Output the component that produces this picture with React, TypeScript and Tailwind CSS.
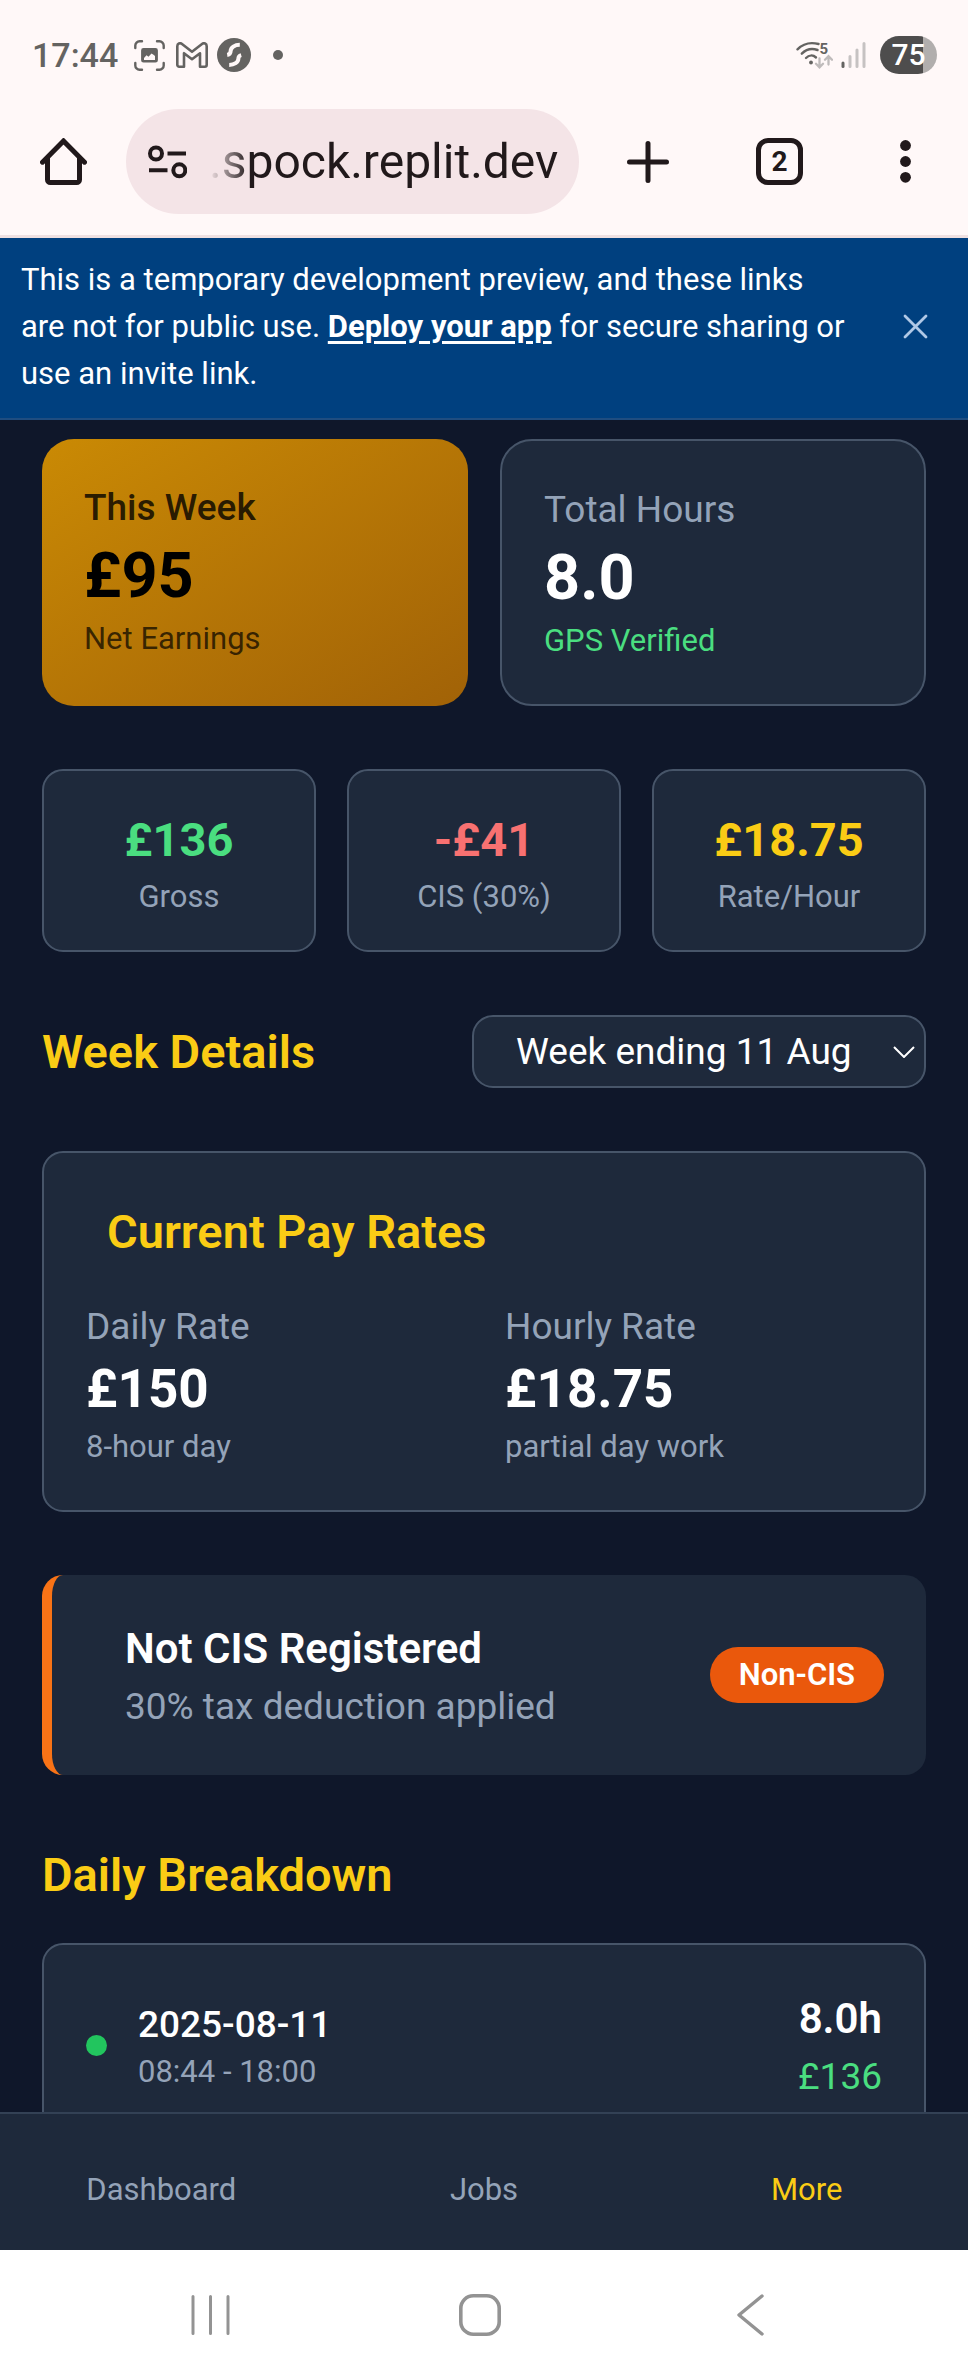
import React from "react";

function StatusBar() {
  return (
    <div className="flex items-center justify-between pt-9 pr-[31px] pl-8 text-[#646361]">
      <div className="flex h-[38px] items-center">
        <span className="w-[102px] text-[34px] leading-[38px] font-medium">17:44</span>
        <svg width="31" height="31" viewBox="0 0 31 31" fill="none" stroke="currentColor" strokeWidth="2.4" strokeLinecap="round" aria-hidden="true">
          <path d="M1.3 8V5.5a4.2 4.2 0 0 1 4.2-4.2H8M23 1.3h2.500a4.200 4.200 0 0 1 4.200 4.200V8M29.700 23v2.500a4.200 4.200 0 0 1-4.200 4.200H23M8 29.700H5.500a4.200 4.200 0 0 1-4.200-4.200V23" />
          <path d="M9.500 8h12a2.400 2.400 0 0 1 2.400 2.400v9.800a2.400 2.400 0 0 1-2.400 2.400h-12a2.400 2.400 0 0 1-2.400-2.400v-9.800A2.400 2.400 0 0 1 9.500 8Z" fill="currentColor" stroke="none" />
          <path d="m10 18 2.500-2.700 2 1.500 3-3.300 2 1.200 1.500 1.300V20H10Z" fill="#fff8f8" stroke="none" />
        </svg>
        <svg className="ml-[11px]" width="32" height="26" viewBox="0 0 32 26" fill="none" stroke="currentColor" strokeWidth="2.600" strokeLinejoin="round" aria-hidden="true">
          <path d="M1.300 4.200c0-2.600 2.600-3.800 4.700-2.200L16 9.800 26 2c2.100-1.600 4.700-.4 4.700 2.200v18.600a1.900 1.900 0 0 1-1.900 1.900H24V11.200l-8 6-8-6v13.500H3.200a1.900 1.900 0 0 1-1.900-1.900Z" />
        </svg>
        <svg className="ml-[9px]" width="34" height="34" viewBox="0 0 34 34" aria-hidden="true">
          <circle cx="17" cy="17" r="17" fill="currentColor" />
          <g fill="none" stroke="#fff8f8" strokeWidth="4">
            <path d="M22.800 6.800c-5 0-9.200 2.600-9.200 6.500 0 1.800-.8 3.200-3.400 3.600" />
            <path d="M12.200 27c5 0 9.200-2.600 9.200-6.500 0-1.800.5-2.800 2.800-3.400" />
          </g>
        </svg>
        <span className="ml-[22px] size-[10px] rounded-full bg-current" />
      </div>
      <div className="flex h-[38px] items-center">
        <svg width="37" height="28" viewBox="0 0 37 28" fill="none" strokeLinecap="round" aria-hidden="true">
          <g stroke="#646361" strokeWidth="2.400">
            <path d="M1.500 8.300C7 2.800 14 .8 22.500 3" />
            <path d="M5.800 12.700c4.500-4.600 10-5.600 15.700-3.700" />
            <path d="M10 17c3-3 7-3.300 10-.5" />
          </g>
          <circle cx="15" cy="21.500" r="1.900" fill="#646361" />
          <text x="23.500" y="13" fontSize="15" fontWeight="700" fill="#646361">5</text>
          <path d="M23.500 17.500V26m-3.500-3.200 3.500 3.500 3.500-3.500M32.500 23.500V15.500M29 18.700l3.500-3.500 3.500 3.500" stroke="#bfbbbb" strokeWidth="2.300" />
        </svg>
        <svg className="ml-2" width="26" height="28" viewBox="0 0 26 28" strokeWidth="3" strokeLinecap="round" aria-hidden="true">
          <path d="M2 22v3.500" stroke="#646361" />
          <path d="M9 15.500v10M16 9v16.500M23 2.500v23" stroke="#c6c2c2" />
        </svg>
        <span className="ml-[13px] flex h-[38px] w-[57px] items-center justify-center rounded-full bg-linear-to-r from-[#4e4d4d] from-75% to-[#b1aead] to-75% text-[30px] leading-[38px] font-medium text-white">
          75
        </span>
      </div>
    </div>
  );
}

function BrowserBar() {
  return (
    <div className="flex items-center pt-[35px] pr-[57px] pb-[21px] pl-10 text-[#21191b]">
      <button type="button" aria-label="Home" className="shrink-0">
        <svg width="47" height="47" viewBox="0 0 47 47" fill="none" stroke="currentColor" strokeWidth="5" strokeLinejoin="round" strokeLinecap="round" aria-hidden="true">
          <path d="M7.500 20.500v21.200a2.800 2.800 0 0 0 2.800 2.800h26.400a2.800 2.800 0 0 0 2.800-2.800V20.500" />
          <path d="M2.500 24.200 23.500 3l21 21.200" strokeLinejoin="miter" />
        </svg>
      </button>
      <div className="ml-[39px] flex h-[105px] min-w-0 flex-1 items-center rounded-full bg-[#f4e4e7] pr-4 pl-[22px]">
        <svg className="shrink-0" width="39" height="34" viewBox="0 0 39 34" fill="none" stroke="currentColor" strokeWidth="4" aria-hidden="true">
          <circle cx="8" cy="8.500" r="6" />
          <circle cx="31.300" cy="25.300" r="6" />
          <path d="M19.500 8.500H38M1 25.300h18.500" />
        </svg>
        <input
          type="text"
          aria-label="Address"
          defaultValue=".spock.replit.dev"
          className="ml-[22px] w-full min-w-0 bg-transparent text-[48px] leading-[60px] outline-none [mask-image:linear-gradient(to_right,transparent,black_40px)]"
        />
      </div>
      <button type="button" aria-label="New tab" className="ml-12 shrink-0">
        <svg width="42" height="42" viewBox="0 0 42 42" stroke="currentColor" strokeWidth="5" strokeLinecap="round" aria-hidden="true">
          <path d="M21 2.500v37M2.500 21h37" />
        </svg>
      </button>
      <button type="button" aria-label="Tabs" className="ml-[87px] flex size-[47px] shrink-0 items-center justify-center rounded-xl border-5 border-current text-[28px] leading-8 font-bold">
        2
      </button>
      <button type="button" aria-label="Menu" className="ml-[97px] shrink-0">
        <svg width="11" height="43" viewBox="0 0 11 43" fill="currentColor" aria-hidden="true">
          <circle cx="5.500" cy="5.500" r="5.400" />
          <circle cx="5.500" cy="21.500" r="5.400" />
          <circle cx="5.500" cy="37.300" r="5.400" />
        </svg>
      </button>
    </div>
  );
}

function PreviewBanner() {
  return (
    <div className="flex items-center justify-between border-b-2 border-[#1f4d80] bg-[#00407f] pt-[18px] pr-10 pb-[21px] pl-[21px] text-white">
      <p className="max-w-[830px] text-[31px] leading-[47px]">
        This is a temporary development preview, and these links are not for public use.{" "}
        <a href="#deploy" className="font-bold underline decoration-3 underline-offset-4">Deploy your app</a> for secure sharing or use an invite link.
      </p>
      <button type="button" aria-label="Close" className="shrink-0">
        <svg width="25" height="25" viewBox="0 0 25 25" stroke="#b0c8e6" strokeWidth="2.800" strokeLinecap="round" aria-hidden="true">
          <path d="m2 2 21 21M23 2 2 23" />
        </svg>
      </button>
    </div>
  );
}

const panel = "border-2 border-[#475569] bg-[#1e293b]";
const label = "text-[37px] leading-[53px]";
const small = "text-[31px] leading-[42px]";
const heading = "text-[47px] leading-[73px] font-semibold text-[#facc15]";

const stats = [
  { value: "£136", label: "Gross", color: "text-[#4ade80]" },
  { value: "-£41", label: "CIS (30%)", color: "text-[#f87171]" },
  { value: "£18.75", label: "Rate/Hour", color: "text-[#facc15]" },
];

const rates = [
  { name: "Daily Rate", value: "£150", note: "8-hour day" },
  { name: "Hourly Rate", value: "£18.75", note: "partial day work" },
];

const tabs = [
  { name: "Dashboard", color: "text-[#94a3b8]" },
  { name: "Jobs", color: "text-[#94a3b8]" },
  { name: "More", color: "text-[#facc15]" },
];

function Earnings() {
  return (
    <main className="min-h-0 flex-1 overflow-y-auto px-[42px] pt-[19px] [scrollbar-width:none]">
      <div className="flex flex-col gap-[63px]">
        <section className="grid grid-cols-2 gap-8">
          <div className="rounded-4xl bg-linear-to-br from-[#ca8a04] to-[#a16207] p-[42px] text-black">
            <p className={`${label} font-medium text-black/80`}>This Week</p>
            <p className="text-[63px] leading-[84px] font-bold">£95</p>
            <p className={`${small} text-black/70`}>Net Earnings</p>
          </div>
          <div className={`${panel} rounded-4xl p-[42px]`}>
            <p className={`${label} text-[#94a3b8]`}>Total Hours</p>
            <p className="text-[63px] leading-[84px] font-bold text-white">8.0</p>
            <p className={`${small} text-[#4ade80]`}>GPS Verified</p>
          </div>
        </section>

        <section className="grid grid-cols-3 gap-[31px]">
          {stats.map((s) => (
            <div key={s.label} className={`${panel} rounded-[21px] px-4 py-8 text-center`}>
              <p className={`text-[47px] leading-[73px] font-bold ${s.color}`}>{s.value}</p>
              <p className={`${small} text-[#94a3b8]`}>{s.label}</p>
            </div>
          ))}
        </section>

        <section className="flex items-center justify-between">
          <h2 className={heading}>Week Details</h2>
          <div className="relative">
            <select aria-label="Week" className={`${panel} ${label} h-[73px] appearance-none rounded-[21px] pr-18 pl-[42px] text-white`}>
              <option>Week ending 11 Aug</option>
            </select>
            <svg className="pointer-events-none absolute top-[31px] right-[11px]" width="22" height="12" viewBox="0 0 22 12" fill="none" stroke="white" strokeWidth="2" aria-hidden="true">
              <path d="m1 1 10 10L21 1" />
            </svg>
          </div>
        </section>

        <section className={`${panel} rounded-[21px] p-[42px]`}>
          <h3 className={`${heading} pl-[21px]`}>Current Pay Rates</h3>
          <div className="mt-8 grid grid-cols-2 gap-[42px]">
            {rates.map((r) => (
              <div key={r.name}>
                <p className={`${label} text-[#94a3b8]`}>{r.name}</p>
                <p className="text-[53px] leading-[73px] font-bold text-white">{r.value}</p>
                <p className={`${small} text-[#94a3b8]`}>{r.note}</p>
              </div>
            ))}
          </div>
        </section>

        <section className="flex items-center justify-between rounded-[21px] border-l-10 border-[#f97316] bg-[#1e293b] p-[42px]">
          <div className="pl-[31px]">
            <p className="text-[42px] leading-[63px] font-semibold text-white">Not CIS Registered</p>
            <p className={`${label} text-[#94a3b8]`}>30% tax deduction applied</p>
          </div>
          <span className={`${small} rounded-full bg-[#ea580c] px-[29px] py-[7px] font-semibold text-white`}>Non-CIS</span>
        </section>

        <section>
          <h2 className={heading}>Daily Breakdown</h2>
          <div className={`${panel} mt-8 flex items-center rounded-[21px] p-[42px]`}>
            <span className="size-[21px] rounded-full bg-[#22c55e]" />
            <div className="ml-[31px] flex-1">
              <p className={`${label} font-medium text-white`}>2025-08-11</p>
              <p className={`${small} text-[#94a3b8]`}>08:44 - 18:00</p>
            </div>
            <div className="text-right">
              <p className="text-[42px] leading-[63px] font-semibold text-white">8.0h</p>
              <p className={`${label} text-[#4ade80]`}>£136</p>
            </div>
          </div>
        </section>
      </div>
    </main>
  );
}

function SystemNav() {
  return (
    <div className="flex h-[126px] items-center bg-white pt-1 pr-[204px] pl-[191px] text-[#939393]">
      <div className="flex flex-1 items-center justify-between">
        <button type="button" aria-label="Recents">
          <svg width="39" height="42" viewBox="0 0 39 42" stroke="currentColor" strokeWidth="3" strokeLinecap="round" aria-hidden="true">
            <path d="M2 2.500v37M19.500 2.500v37M37 2.500v37" />
          </svg>
        </button>
        <button type="button" aria-label="Home screen" className="mr-2">
          <svg width="42" height="42" viewBox="0 0 42 42" fill="none" stroke="currentColor" strokeWidth="3.600" aria-hidden="true">
            <rect x="1.800" y="1.800" width="38.400" height="38.400" rx="12.500" />
          </svg>
        </button>
        <button type="button" aria-label="Back">
          <svg width="27" height="42" viewBox="0 0 27 42" fill="none" stroke="currentColor" strokeWidth="3.400" strokeLinecap="round" strokeLinejoin="round" aria-hidden="true">
            <path d="M25 2 2 21l23 19" />
          </svg>
        </button>
      </div>
    </div>
  );
}

export default function App() {
  return (
    <div className="flex h-screen flex-col overflow-hidden bg-[#0f172a] font-[Roboto,'Liberation_Sans',sans-serif]">
      <header>
        <div className="border-b-3 border-[#efe0e1] bg-[#fff8f8]">
          <StatusBar />
          <BrowserBar />
        </div>
        <PreviewBanner />
      </header>
      <Earnings />
      <footer>
        <nav className="grid grid-cols-3 border-t-2 border-[#334155] bg-[#1e293b] pt-[55px] pb-[39px] text-center">
          {tabs.map((t) => (
            <a key={t.name} href={`#${t.name.toLowerCase()}`} className={`${small} ${t.color}`}>
              {t.name}
            </a>
          ))}
        </nav>
        <SystemNav />
      </footer>
    </div>
  );
}
